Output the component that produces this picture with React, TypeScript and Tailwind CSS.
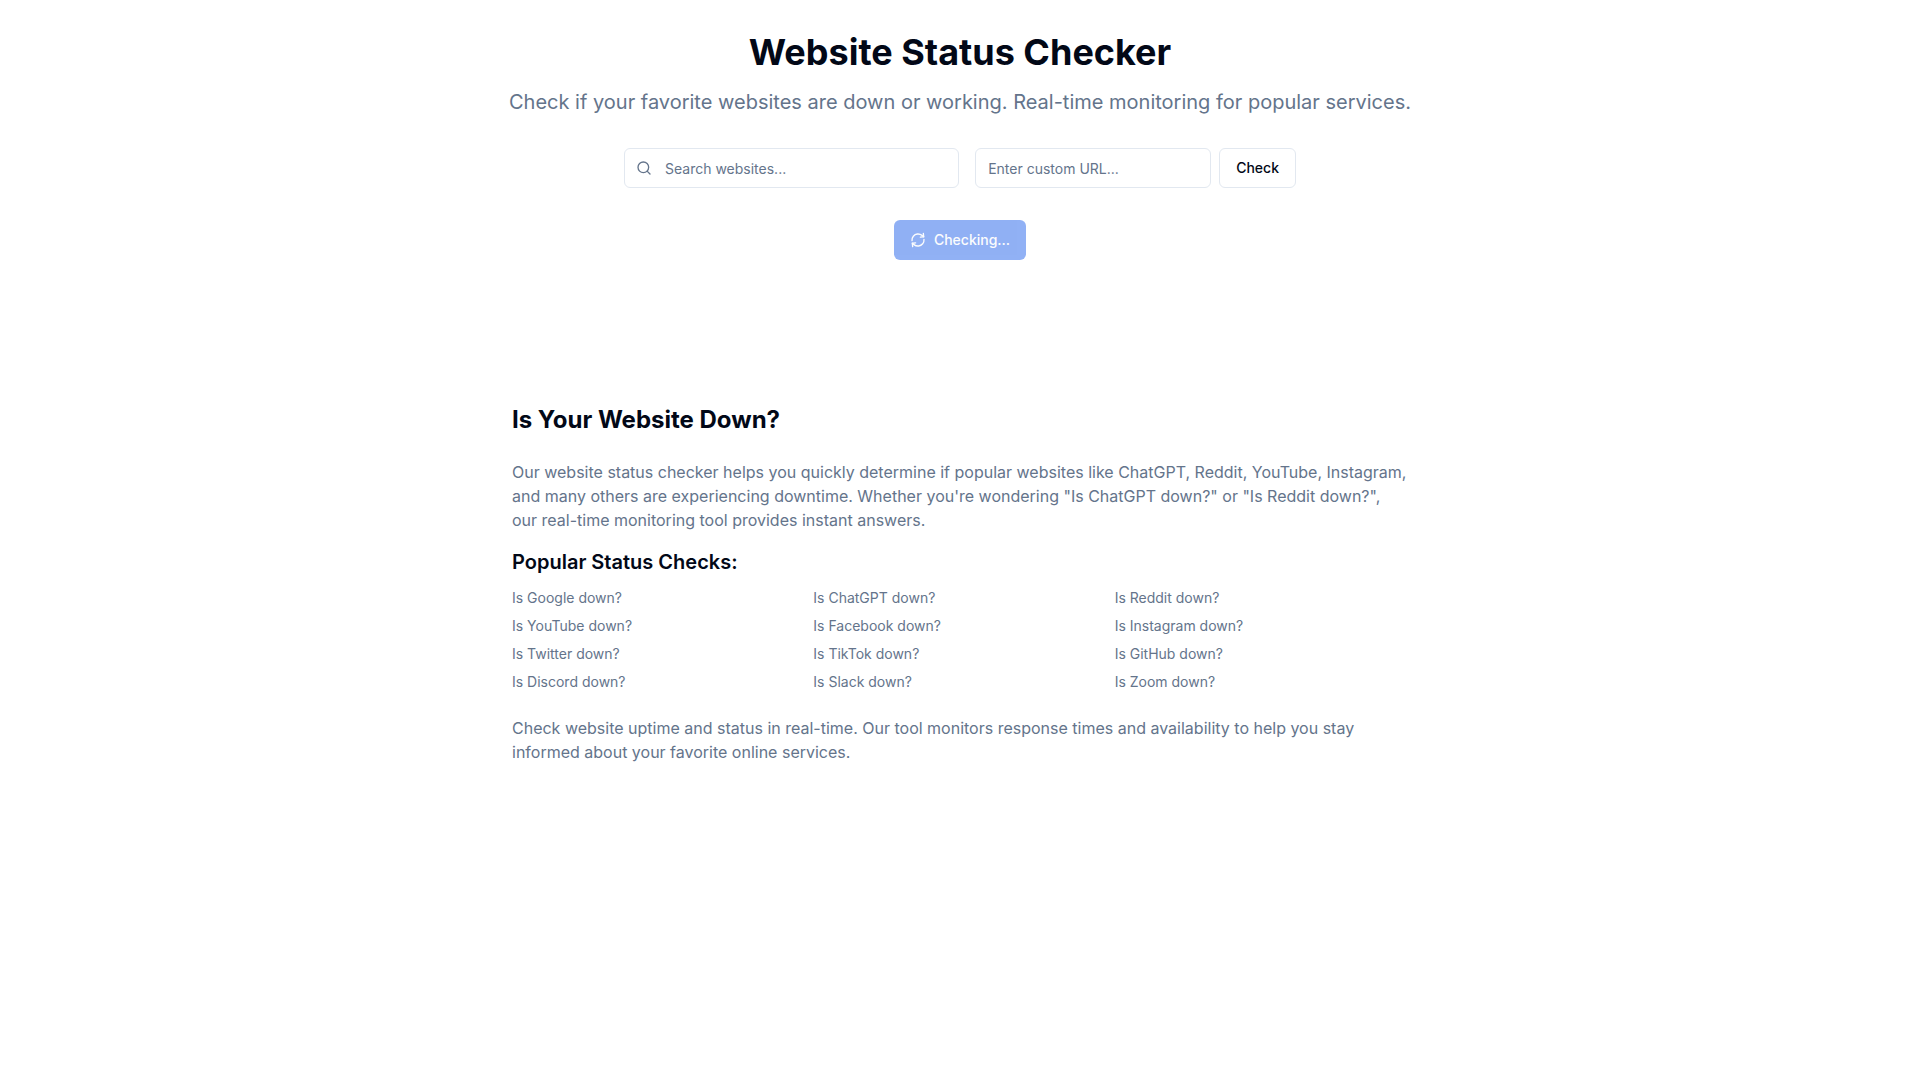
import { useState } from "react";
import { RefreshCw, Search } from "lucide-react";

const popularSites = [
  "Google",
  "ChatGPT",
  "Reddit",
  "YouTube",
  "Facebook",
  "Instagram",
  "Twitter",
  "TikTok",
  "GitHub",
  "Discord",
  "Slack",
  "Zoom",
];

const inputClass =
  "h-10 rounded-md border border-[#e2e8f0] bg-white py-2 text-sm text-[#020817] placeholder:text-[#64748b] focus:outline-none focus:ring-2 focus:ring-[#2463eb]";

export default function App() {
  const [searchTerm, setSearchTerm] = useState("");
  const [customUrl, setCustomUrl] = useState("");
  const [isChecking] = useState(true);

  return (
    <div className="min-h-screen bg-white font-['Inter',sans-serif] text-[#020817]">
      <div className="mx-auto max-w-[1400px] px-4 py-8">
        <div className="mb-8 text-center">
          <h1 className="mb-4 text-4xl font-bold">Website Status Checker</h1>
          <p className="text-xl text-[#64748b]">
            Check if your favorite websites are down or working. Real-time monitoring for popular services.
          </p>
        </div>

        {/* Search + custom URL */}
        <div className="mx-auto mb-8 flex max-w-2xl gap-4">
          <div className="relative flex-1">
            <Search className="absolute left-3 top-3 h-4 w-4 text-[#64748b]" />
            <input
              type="text"
              placeholder="Search websites..."
              value={searchTerm}
              onChange={(e) => setSearchTerm(e.target.value)}
              className={`${inputClass} w-full pl-10 pr-3`}
            />
          </div>
          <div className="flex gap-2">
            <input
              type="text"
              placeholder="Enter custom URL..."
              value={customUrl}
              onChange={(e) => setCustomUrl(e.target.value)}
              className={`${inputClass} w-[236px] px-3`}
            />
            <button className="h-10 rounded-md border border-[#e2e8f0] bg-white px-4 py-2 text-sm font-medium hover:bg-[#f1f5f9]">
              Check
            </button>
          </div>
        </div>

        <div className="mb-8 flex justify-center">
          <button
            disabled={isChecking}
            className="inline-flex h-10 items-center justify-center gap-2 rounded-md bg-[#2463eb] px-4 py-2 text-sm font-medium text-[#f8fafc] disabled:opacity-50"
          >
            <RefreshCw className="h-4 w-4 -rotate-6" />
            {isChecking ? "Checking..." : "Refresh All"}
          </button>
        </div>

        <div className="mx-auto mt-36 max-w-4xl">
          <h2 className="mb-6 text-2xl font-bold">Is Your Website Down?</h2>
          <p className="mb-4 text-[#64748b]">
            Our website status checker helps you quickly determine if popular websites like ChatGPT, Reddit, YouTube,
            Instagram, and many others are experiencing downtime. Whether you&apos;re wondering &quot;Is ChatGPT
            down?&quot; or &quot;Is Reddit down?&quot;, our real-time monitoring tool provides instant answers.
          </p>
          <h3 className="mb-3 text-xl font-semibold">Popular Status Checks:</h3>
          <div className="grid grid-cols-3 gap-2 text-sm text-[#64748b]">
            {popularSites.map((site) => (
              <div key={site}>Is {site} down?</div>
            ))}
          </div>
          <p className="mt-6 text-[#64748b]">
            Check website uptime and status in real-time. Our tool monitors response times and availability to help you
            stay informed about your favorite online services.
          </p>
        </div>
      </div>
    </div>
  );
}
